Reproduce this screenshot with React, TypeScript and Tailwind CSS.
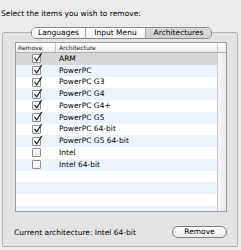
import React from "react";

const rows: { name: string; checked: boolean }[] = [
  { name: "ARM", checked: true },
  { name: "PowerPC", checked: true },
  { name: "PowerPC G3", checked: true },
  { name: "PowerPC G4", checked: true },
  { name: "PowerPC G4+", checked: true },
  { name: "PowerPC G5", checked: true },
  { name: "PowerPC 64-bit", checked: true },
  { name: "PowerPC G5 64-bit", checked: true },
  { name: "Intel", checked: false },
  { name: "Intel 64-bit", checked: false },
  { name: "", checked: false },
  { name: "", checked: false },
  { name: "", checked: false },
  { name: "", checked: false },
];

function Checkbox({ checked, visible }: { checked: boolean; visible: boolean }) {
  if (!visible) return null;
  return (
    <div className="relative w-[9px] h-[9px] rounded-[1px] border border-[#8e8e8e] bg-gradient-to-b from-white to-[#ececec]">
      {checked && (
        <svg
          className="absolute left-[0px] top-[-3px]"
          width="10"
          height="11"
          viewBox="0 0 10 11"
        >
          <path
            d="M1.8 6.4 L3.8 8.8 L8.4 1.4"
            fill="none"
            stroke="#1a1a1a"
            strokeWidth="1.1"
            strokeLinecap="round"
            strokeLinejoin="round"
          />
        </svg>
      )}
    </div>
  );
}

export default function App() {
  return (
    <div
      className="w-[241px] h-[250px] bg-[#ebebeb] text-black overflow-hidden flex flex-col"
      style={{ fontFamily: '"DejaVu Sans", "Liberation Sans", sans-serif' }}
    >
      <div className="pl-[1px] pt-[9px] h-[32px] text-[7.5px] leading-[10px]">
        Select the items you wish to remove:
      </div>
      <div className="ml-[2px] mr-[3px] h-[215px] border border-[#b3b3b3] rounded-[2px] bg-[#e3e3e3] flex flex-col">
        <div className="-mt-[6px] ml-[28px] flex w-[181px] h-[12px] rounded-[5px] border border-[#8a8a8a] overflow-hidden text-[7.5px] leading-[10px]">
          <div className="w-[54px] flex items-center justify-center bg-gradient-to-b from-white to-[#f0f0f0] border-r border-[#a8a8a8]">
            Languages
          </div>
          <div className="w-[60px] flex items-center justify-center bg-gradient-to-b from-white to-[#f0f0f0] border-r border-[#a8a8a8]">
            Input Menu
          </div>
          <div className="flex-1 flex items-center justify-center bg-gradient-to-b from-[#dcdcdc] to-[#cfcfcf]">
            Architectures
          </div>
        </div>
        <div className="mt-[3px] ml-[12px] mr-[10px] h-[170px] border border-[#9c9c9c] bg-white flex flex-col">
          <div className="flex h-[10px] border-b border-[#b0b0b0] bg-gradient-to-b from-white to-[#ececec] text-[6px] leading-[9px] text-[#222]">
            <div className="w-[40px] border-r border-[#c4c4c4] pl-[2px]">Remove</div>
            <div className="w-[161px] pl-[3px]">Architecture</div>
            <div className="flex-1 border-l border-[#c4c4c4]"></div>
          </div>
          <div className="flex flex-1 overflow-hidden">
            <div className="w-[201px] flex flex-col overflow-hidden">
              {rows.map((r, i) => (
                <div
                  key={i}
                  className={
                    "flex items-center shrink-0 h-[11.75px] text-[7.5px] leading-[10px] " +
                    (i === 0 ? "bg-[#d6d6d6]" : i % 2 === 1 ? "bg-[#edf3fe]" : "bg-white")
                  }
                >
                  <div className="w-[40px] flex justify-center">
                    <Checkbox checked={r.checked} visible={r.name !== ""} />
                  </div>
                  <div className="pl-[3px]">{r.name}</div>
                </div>
              ))}
            </div>
            <div className="flex-1 border-l border-[#c8c8c8] bg-gradient-to-r from-[#f4f4f4] to-[#e9e9e9]"></div>
          </div>
        </div>
        <div className="mt-[14px] ml-[11px] mr-[10px] flex items-center justify-between">
          <div className="text-[7.5px] leading-[10px] pt-[1px]">Current architecture: Intel 64-bit</div>
          <div className="w-[55px] h-[12px] rounded-full border border-[#7c7c7c] bg-gradient-to-b from-white to-[#ececec] flex items-center justify-center text-[7.5px] leading-[10px]">
            Remove
          </div>
        </div>
      </div>
    </div>
  );
}
